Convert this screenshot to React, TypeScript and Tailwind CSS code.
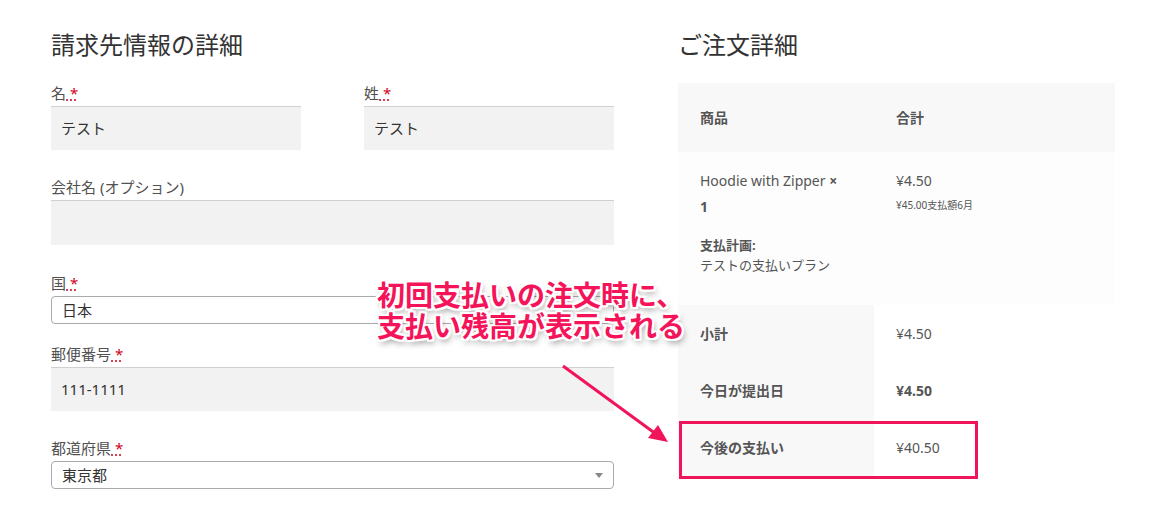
export default function App() {
  const f = { fontFamily: '"Noto Sans","Noto Sans CJK JP",sans-serif' };
  const Label = ({ t, req = true }: { t: string; req?: boolean }) => (
    <div className="text-[15px] text-[#515151] leading-[20px] mb-[3px]">
      {t}
      {req && <span className="text-[#d0021b] underline decoration-dotted"> *</span>}
    </div>
  );
  const Input = ({ v = "", h = "h-[44px]" }: { v?: string; h?: string }) => (
    <div className={`${h} bg-[#f2f2f2] border-t border-[#d0d0d0] px-[10px] flex items-center text-[15px] text-[#333]`}>{v}</div>
  );
  const Select = ({ v, arrow }: { v: string; arrow?: boolean }) => (
    <div className="h-[28px] border border-[#aaa] rounded-[4px] px-[10px] flex items-center justify-between text-[15px] text-[#333] bg-white">
      <span>{v}</span>
      {arrow && <span className="w-0 h-0 border-l-[4px] border-r-[4px] border-t-[5px] border-l-transparent border-r-transparent border-t-[#888]" />}
    </div>
  );
  return (
    <div className="relative w-[1165px] h-[508px] bg-white overflow-hidden" style={f}>
      <div className="flex pl-[51px] pt-[28px] gap-[64px]">
        <div className="w-[563px]">
          <h2 className="text-[24px] text-[#333] leading-[34px] mb-[21px]">請求先情報の詳細</h2>
          <div className="flex gap-[63px] mb-[27px]">
            <div className="w-[250px]"><Label t="名" /><Input v="テスト" /></div>
            <div className="w-[250px]"><Label t="姓" /><Input v="テスト" /></div>
          </div>
          <div className="mb-[28px]"><Label t="会社名 (オプション)" req={false} /><Input h="h-[45px]" /></div>
          <div className="mb-[20px]"><Label t="国" /><Select v="日本" /></div>
          <div className="mb-[27px]"><Label t="郵便番号" /><Input v="111-1111" /></div>
          <div><Label t="都道府県" /><Select v="東京都" arrow /></div>
        </div>
        <div className="w-[437px]">
          <h2 className="text-[24px] text-[#333] leading-[34px] mb-[21px]">ご注文詳細</h2>
          <div className="text-[14px] text-[#555]">
            <div className="flex h-[69px] items-center bg-[#f8f8f8] font-bold">
              <div className="w-[196px] pl-[22px]">商品</div>
              <div className="pl-[22px]">合計</div>
            </div>
            <div className="flex h-[153px] bg-[#fdfdfd] pt-[16px]">
              <div className="w-[196px] pl-[22px]">
                <div className="leading-[26px]">Hoodie with Zipper <b>×<br />1</b></div>
                <div className="mt-[15px] font-bold text-[13px] leading-[20px]">支払計画:</div>
                <div className="text-[13px] leading-[20px]">テストの支払いプラン</div>
              </div>
              <div className="pl-[22px]">
                <div className="leading-[26px]">¥4.50</div>
                <div className="text-[10px] leading-[22px]">¥45.00支払額6月</div>
              </div>
            </div>
            {[["小計", "¥4.50", false], ["今日が提出日", "¥4.50", true], ["今後の支払い", "¥40.50", false]].map(([a, b, bold], i) => (
              <div key={i} className="flex h-[57px] items-center">
                <div className="w-[196px] h-full flex items-center pl-[22px] bg-[#f8f8f8] font-bold">{a}</div>
                <div className={`pl-[22px] ${bold ? "font-bold" : ""}`}>{b}</div>
              </div>
            ))}
          </div>
        </div>
      </div>
      <div className="absolute left-[679px] top-[421px] w-[299px] h-[58px] border-[3px] border-[#f0145a]" />
      <svg className="absolute left-0 top-0" width="1165" height="508">
        <line x1="563" y1="366" x2="656" y2="434" stroke="#f0145a" strokeWidth="3" />
        <polygon points="668,442 648,438 658,425" fill="#f0145a" />
      </svg>
      <div
        className="absolute left-[377px] top-[280px] text-[28px] font-bold leading-[31px] text-[#f5145a]"
        style={{ textShadow: "-2px -2px 0 #fff,2px -2px 0 #fff,-2px 2px 0 #fff,2px 2px 0 #fff,0 2px 0 #fff,0 -2px 0 #fff,2px 0 0 #fff,-2px 0 0 #fff,2px 4px 6px rgba(0,0,0,0.45)" }}
      >
        初回支払いの注文時に、<br />支払い残高が表示される
      </div>
    </div>
  );
}
